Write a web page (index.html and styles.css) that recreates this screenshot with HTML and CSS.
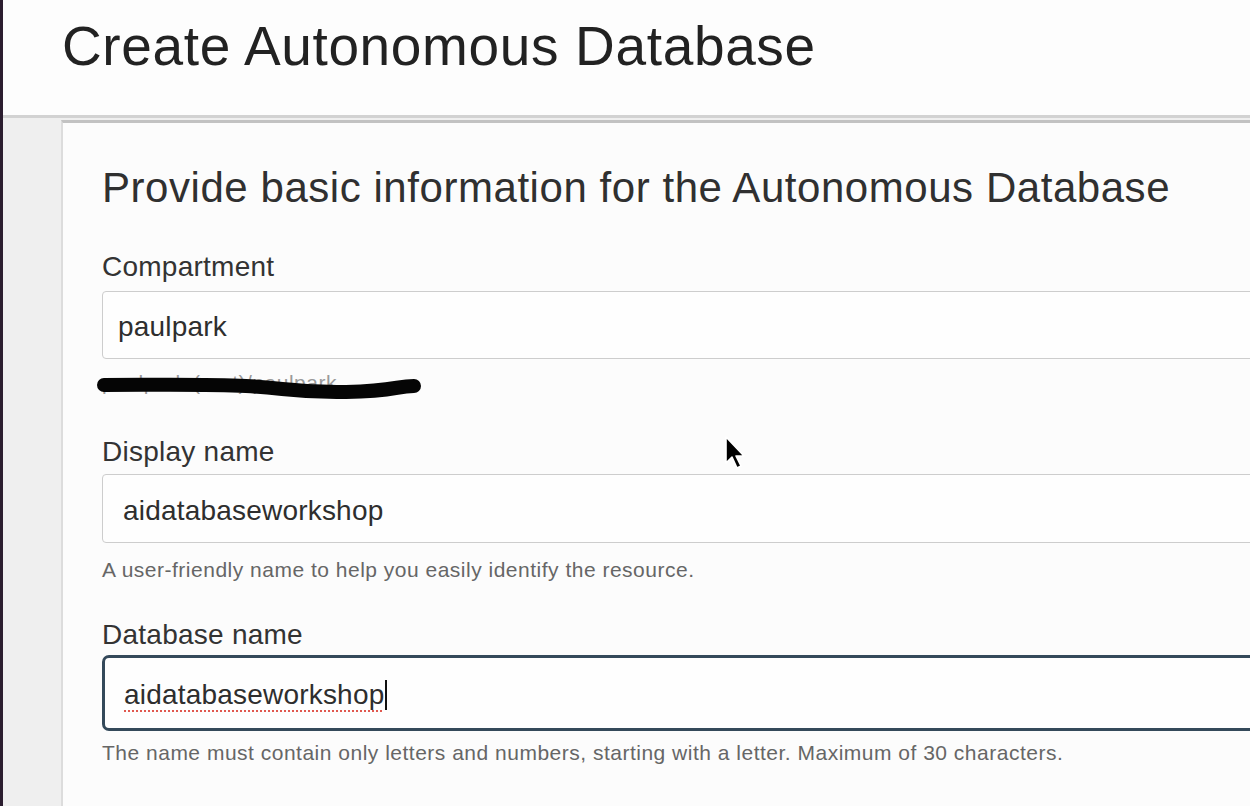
FILE: index.html
```html
<!DOCTYPE html>
<html lang="en">
<head>
<meta charset="utf-8">
<title>Create Autonomous Database</title>
<link rel="stylesheet" href="styles.css">
</head>
<body>
<div class="screen">
  <div class="edge"></div>
  <div class="main">
    <header class="page-header">
      <h1 class="page-title">Create Autonomous Database</h1>
    </header>
    <div class="content">
      <section class="card">
        <h2 class="card-title">Provide basic information for the Autonomous Database</h2>

        <div class="field">
          <label class="field-label">Compartment</label>
          <div class="input input-plain">paulpark</div>
          <div class="helper helper-redacted">
            <span>paulpark (root)/paulpark</span>
            <svg class="scribble" width="330" height="28" viewBox="0 0 330 28">
              <path d="M8 10 C 60 10, 110 9, 150 11 S 200 18, 250 17 S 300 11, 318 11" fill="none" stroke="#050505" stroke-width="14" stroke-linecap="round"/>
            </svg>
          </div>
        </div>

        <div class="field field-2">
          <label class="field-label">Display name</label>
          <div class="input input-indent">aidatabaseworkshop</div>
          <div class="helper helper-2">A user-friendly name to help you easily identify the resource.</div>
        </div>

        <div class="field field-3">
          <label class="field-label">Database name</label>
          <div class="input input-focus"><span class="spell">aidatabaseworkshop</span><span class="caret"></span></div>
          <div class="helper helper-3">The name must contain only letters and numbers, starting with a letter. Maximum of 30 characters.</div>
        </div>
      </section>
    </div>
  </div>
  <svg class="pointer" width="26" height="38" viewBox="0 0 26 38">
    <path d="M2 2 L2 28 L8 22 L13 33 L17 31 L12 21 L20 21 Z" fill="#000" stroke="#fff" stroke-width="1.6" stroke-linejoin="round"/>
  </svg>
</div>
</body>
</html>
```

FILE: styles.css
```css
html, body {
  margin: 0;
  padding: 0;
  width: 1250px;
  height: 806px;
  overflow: hidden;
  background: #fbfbfb;
  font-family: "Liberation Sans", Arial, Helvetica, sans-serif;
}

.screen {
  position: relative;
  display: flex;
  width: 1250px;
  height: 806px;
  overflow: hidden;
}

.edge {
  width: 3px;
  flex: 0 0 3px;
  background: #2b1d2f;
}

.main {
  flex: 1;
  display: flex;
  flex-direction: column;
  min-width: 0;
}

.page-header {
  height: 96px;
  padding: 19px 0 0 59px;
  background: #fdfdfd;
  border-bottom: 3px solid #d2d2d2;
}

.page-title {
  margin: 0;
  font-size: 55px;
  line-height: 55px;
  font-weight: 400;
  color: #222;
  letter-spacing: 0.65px;
}

.content {
  flex: 1;
  background: #efefef;
  padding: 2px 0 0 58px;
  min-height: 0;
}

.card {
  height: 100%;
  margin-right: -200px;
  box-sizing: border-box;
  background: #fcfcfc;
  border-top: 3px solid #c2c2c2;
  border-left: 2px solid #dcdcdc;
  padding: 44px 0 0 39px;
}

.card-title {
  margin: 0;
  font-size: 42px;
  line-height: 41px;
  font-weight: 400;
  color: #303030;
  letter-spacing: 0.55px;
  white-space: nowrap;
}

.field {
  display: flex;
  flex-direction: column;
  align-items: flex-start;
  margin-top: 45px;
}

.field-2 { margin-top: 44px; }
.field-3 { margin-top: 40px; }

.field-label {
  font-size: 28px;
  line-height: 28px;
  color: #333;
  letter-spacing: 0.25px;
}

.input {
  margin-top: 10px;
  width: 1300px;
  height: 68px;
  box-sizing: border-box;
  border: 1px solid #cdcdcd;
  border-radius: 4px;
  background: #fefefe;
  display: flex;
  align-items: center;
  font-size: 28px;
  color: #2e2e2e;
  letter-spacing: 0.2px;
  padding: 4px 0 0 15px;
}

.input-indent {
  margin-top: 8px;
  height: 69px;
  padding-left: 20px;
}

.input-focus {
  margin-top: 6px;
  height: 76px;
  border: 3px solid #34495a;
  border-radius: 7px;
  padding-left: 19px;
}

.spell {
  text-decoration: underline dotted #e0584f;
  text-decoration-thickness: 2px;
  text-underline-offset: 6px;
}

.caret {
  display: inline-block;
  width: 2px;
  height: 30px;
  background: #111;
  margin-left: 1px;
}

.helper {
  font-size: 21px;
  line-height: 22px;
  color: #666;
  letter-spacing: 0.5px;
  white-space: nowrap;
}

.helper-redacted {
  position: relative;
  margin-top: 13px;
  color: #9a9a9a;
}

.scribble {
  position: absolute;
  left: -6px;
  top: 3px;
}

.helper-2 { margin-top: 16px; }
.helper-3 { margin-top: 11px; }

.pointer {
  position: absolute;
  left: 724px;
  top: 435px;
}
```
